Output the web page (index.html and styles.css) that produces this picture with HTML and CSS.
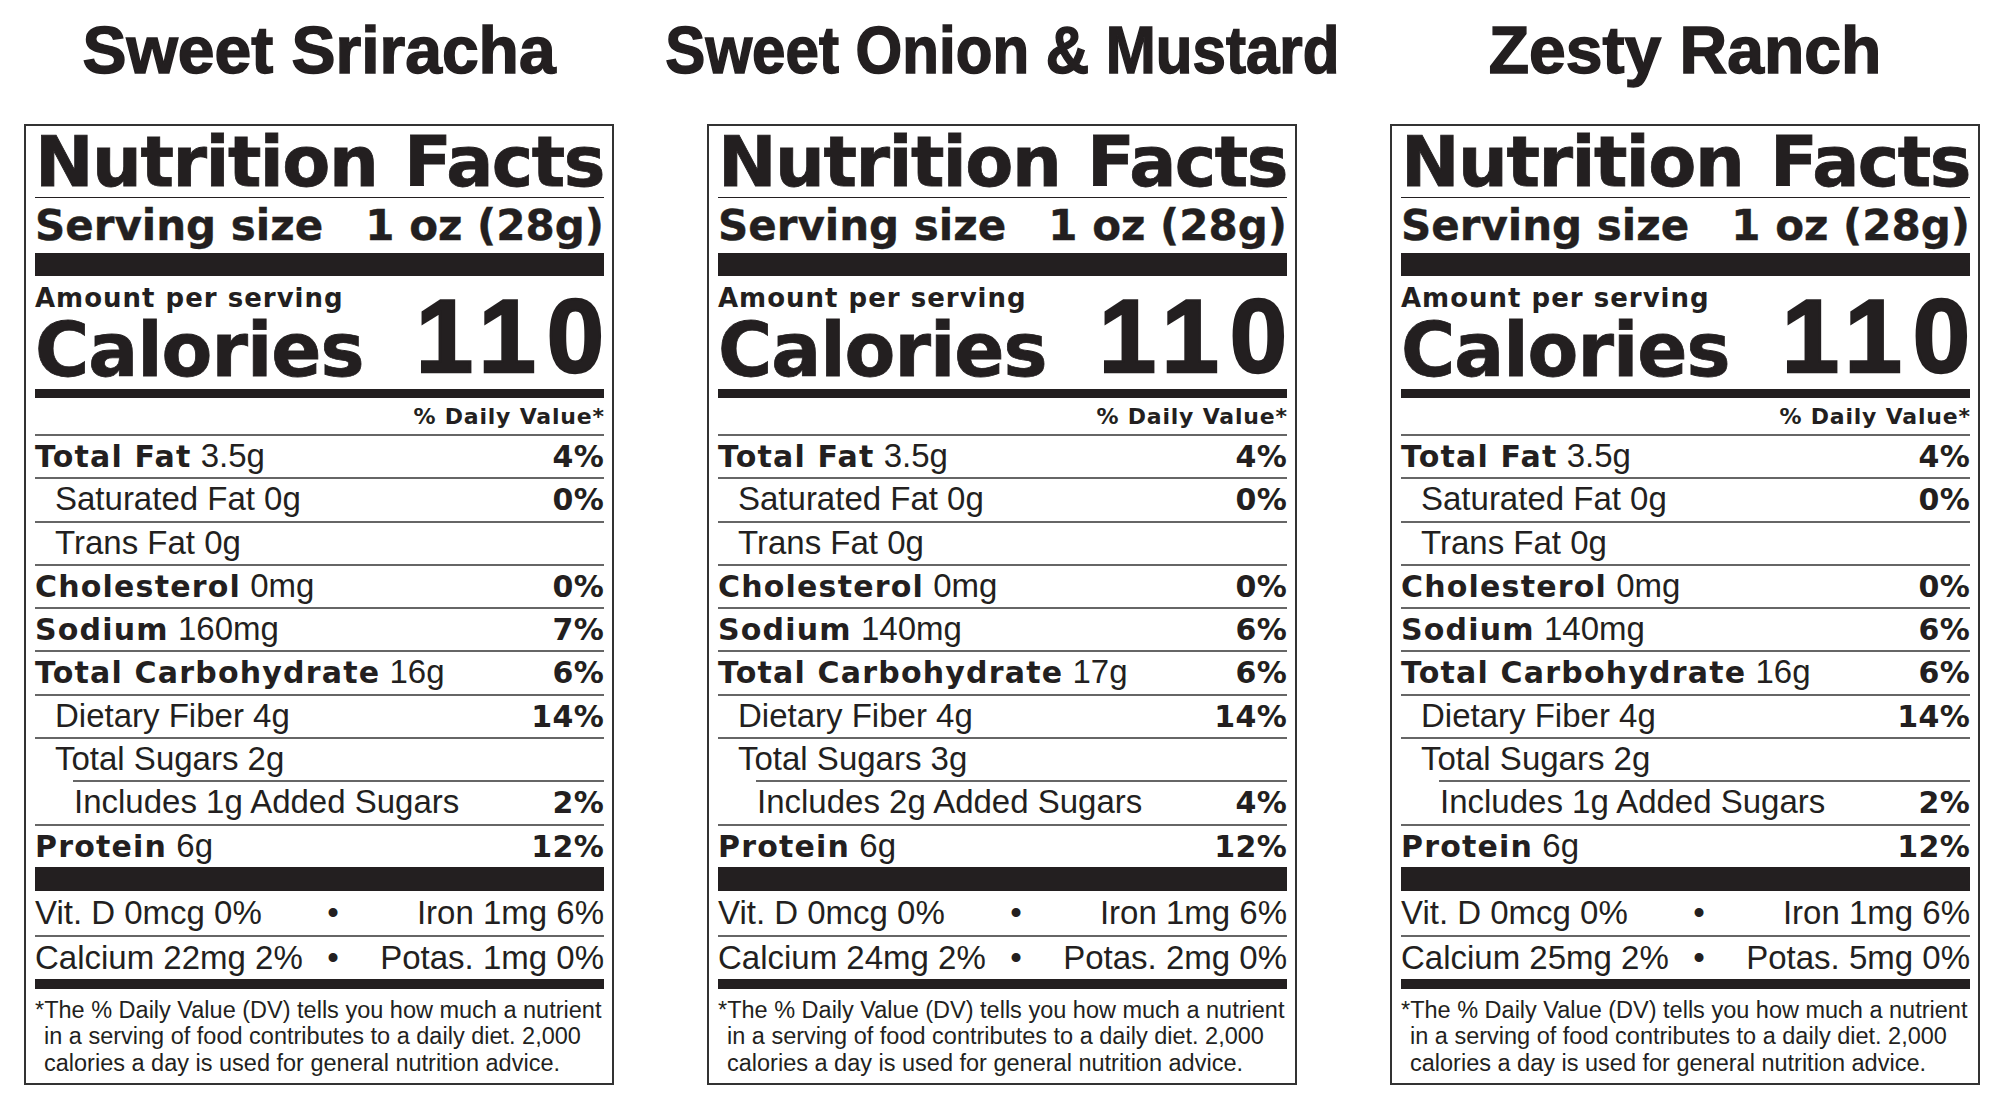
FILE: index.html
```html
<!DOCTYPE html>
<html lang="en">
<head>
<meta charset="utf-8">
<title>Nutrition Facts</title>
<link rel="stylesheet" href="styles.css">
</head>
<body>
<div class="page">

  <section class="panel">
    <h2 class="flavor"><span>Sweet Sriracha</span></h2>
    <div class="label">
      <div class="nf"><span>Nutrition</span><span>Facts</span></div>
      <div class="serving"><span>Serving size</span><span>1 oz (28g)</span></div>
      <div class="bar"></div>
      <div class="cal">
        <div class="cal-left">
          <div class="amount">Amount per serving</div>
          <div class="calories">Calories</div>
        </div>
        <div class="kcal">110</div>
      </div>
      <div class="rule-m"></div>
      <div class="dv">% Daily Value*</div>
      <div class="row"><span><b>Total Fat</b> 3.5g</span><b>4%</b></div>
      <div class="row ind"><span>Saturated Fat 0g</span><b>0%</b></div>
      <div class="row ind"><span>Trans Fat 0g</span></div>
      <div class="row"><span><b>Cholesterol</b> 0mg</span><b>0%</b></div>
      <div class="row"><span><b>Sodium</b> 160mg</span><b>7%</b></div>
      <div class="row"><span><b>Total Carbohydrate</b> 16g</span><b>6%</b></div>
      <div class="row ind"><span>Dietary Fiber 4g</span><b>14%</b></div>
      <div class="row ind"><span>Total Sugars 2g</span></div>
      <div class="row ind2"><span>Includes 1g Added Sugars</span><b>2%</b></div>
      <div class="row"><span><b>Protein</b> 6g</span><b>12%</b></div>
      <div class="bar bar-b"></div>
      <div class="vit"><span>Vit. D 0mcg 0%</span><span class="dot">•</span><span class="r">Iron 1mg 6%</span></div>
      <div class="vit sep"><span>Calcium 22mg 2%</span><span class="dot">•</span><span class="r">Potas. 1mg 0%</span></div>
      <div class="rule-f"></div>
      <div class="foot">
        <div>*The % Daily Value (DV) tells you how much a nutrient</div>
        <div class="hang">in a serving of food contributes to a daily diet. 2,000</div>
        <div class="hang">calories a day is used for general nutrition advice.</div>
      </div>
    </div>
  </section>

  <section class="panel">
    <h2 class="flavor"><span class="squeeze">Sweet Onion &amp; Mustard</span></h2>
    <div class="label">
      <div class="nf"><span>Nutrition</span><span>Facts</span></div>
      <div class="serving"><span>Serving size</span><span>1 oz (28g)</span></div>
      <div class="bar"></div>
      <div class="cal">
        <div class="cal-left">
          <div class="amount">Amount per serving</div>
          <div class="calories">Calories</div>
        </div>
        <div class="kcal">110</div>
      </div>
      <div class="rule-m"></div>
      <div class="dv">% Daily Value*</div>
      <div class="row"><span><b>Total Fat</b> 3.5g</span><b>4%</b></div>
      <div class="row ind"><span>Saturated Fat 0g</span><b>0%</b></div>
      <div class="row ind"><span>Trans Fat 0g</span></div>
      <div class="row"><span><b>Cholesterol</b> 0mg</span><b>0%</b></div>
      <div class="row"><span><b>Sodium</b> 140mg</span><b>6%</b></div>
      <div class="row"><span><b>Total Carbohydrate</b> 17g</span><b>6%</b></div>
      <div class="row ind"><span>Dietary Fiber 4g</span><b>14%</b></div>
      <div class="row ind"><span>Total Sugars 3g</span></div>
      <div class="row ind2"><span>Includes 2g Added Sugars</span><b>4%</b></div>
      <div class="row"><span><b>Protein</b> 6g</span><b>12%</b></div>
      <div class="bar bar-b"></div>
      <div class="vit"><span>Vit. D 0mcg 0%</span><span class="dot">•</span><span class="r">Iron 1mg 6%</span></div>
      <div class="vit sep"><span>Calcium 24mg 2%</span><span class="dot">•</span><span class="r">Potas. 2mg 0%</span></div>
      <div class="rule-f"></div>
      <div class="foot">
        <div>*The % Daily Value (DV) tells you how much a nutrient</div>
        <div class="hang">in a serving of food contributes to a daily diet. 2,000</div>
        <div class="hang">calories a day is used for general nutrition advice.</div>
      </div>
    </div>
  </section>

  <section class="panel">
    <h2 class="flavor"><span>Zesty Ranch</span></h2>
    <div class="label">
      <div class="nf"><span>Nutrition</span><span>Facts</span></div>
      <div class="serving"><span>Serving size</span><span>1 oz (28g)</span></div>
      <div class="bar"></div>
      <div class="cal">
        <div class="cal-left">
          <div class="amount">Amount per serving</div>
          <div class="calories">Calories</div>
        </div>
        <div class="kcal">110</div>
      </div>
      <div class="rule-m"></div>
      <div class="dv">% Daily Value*</div>
      <div class="row"><span><b>Total Fat</b> 3.5g</span><b>4%</b></div>
      <div class="row ind"><span>Saturated Fat 0g</span><b>0%</b></div>
      <div class="row ind"><span>Trans Fat 0g</span></div>
      <div class="row"><span><b>Cholesterol</b> 0mg</span><b>0%</b></div>
      <div class="row"><span><b>Sodium</b> 140mg</span><b>6%</b></div>
      <div class="row"><span><b>Total Carbohydrate</b> 16g</span><b>6%</b></div>
      <div class="row ind"><span>Dietary Fiber 4g</span><b>14%</b></div>
      <div class="row ind"><span>Total Sugars 2g</span></div>
      <div class="row ind2"><span>Includes 1g Added Sugars</span><b>2%</b></div>
      <div class="row"><span><b>Protein</b> 6g</span><b>12%</b></div>
      <div class="bar bar-b"></div>
      <div class="vit"><span>Vit. D 0mcg 0%</span><span class="dot">•</span><span class="r">Iron 1mg 6%</span></div>
      <div class="vit sep"><span>Calcium 25mg 2%</span><span class="dot">•</span><span class="r">Potas. 5mg 0%</span></div>
      <div class="rule-f"></div>
      <div class="foot">
        <div>*The % Daily Value (DV) tells you how much a nutrient</div>
        <div class="hang">in a serving of food contributes to a daily diet. 2,000</div>
        <div class="hang">calories a day is used for general nutrition advice.</div>
      </div>
    </div>
  </section>

</div>
</body>
</html>
```

FILE: styles.css
```css
html, body {
  margin: 0;
  padding: 0;
  background: #ffffff;
}

body {
  color: #231f20;
  font-family: "Liberation Sans", Arial, sans-serif;
}

.page {
  display: flex;
  gap: 93px;
  padding-left: 24px;
}

.panel {
  width: 590px;
  flex: 0 0 590px;
}

.flavor {
  margin: 0;
  display: flex;
  justify-content: center;
  height: 124px;
  box-sizing: border-box;
  padding-top: 13px;
  font: bold 66px/74px "Liberation Sans", Arial, sans-serif;
  white-space: nowrap;
  -webkit-text-stroke: 1.5px #231f20;
}

.flavor span {
  flex: 0 0 auto;
}

.flavor .squeeze {
  display: inline-block;
  transform: scaleX(0.91);
}

.label {
  border: 2px solid #333333;
  padding: 0 8px 0 9px;
}

.nf {
  display: flex;
  justify-content: space-between;
  padding-top: 1px;
  height: 70px;
  font: bold 70px/70px "DejaVu Sans", sans-serif;
  letter-spacing: -1.5px;
  white-space: nowrap;
  border-bottom: 1px solid #231f20;
  -webkit-text-stroke: 0.8px #231f20;
}

.serving {
  display: flex;
  justify-content: space-between;
  height: 55px;
  font: bold 42px/55px "DejaVu Sans", sans-serif;
  white-space: nowrap;
  -webkit-text-stroke: 0.4px #231f20;
}

.bar {
  height: 23px;
  background: #231f20;
}

.bar-b {
  height: 24px;
}

.cal {
  display: flex;
  justify-content: space-between;
  align-items: flex-end;
  height: 113px;
  box-sizing: border-box;
  padding: 7px 0 2px;
}

.amount {
  font: bold 26px/30px "DejaVu Sans", sans-serif;
  letter-spacing: 1px;
  white-space: nowrap;
}

.calories {
  font: bold 74px/74px "DejaVu Sans", sans-serif;
  letter-spacing: -1px;
  white-space: nowrap;
  -webkit-text-stroke: 0.8px #231f20;
}

.kcal {
  font: bold 103px/100px "Liberation Sans", Arial, sans-serif;
  letter-spacing: 11px;
  margin-right: -11px;
  -webkit-text-stroke: 2.5px #231f20;
}

.rule-m {
  height: 9px;
  background: #231f20;
}

.dv {
  height: 36px;
  box-sizing: border-box;
  padding-top: 7px;
  text-align: right;
  font: bold 22px/24px "DejaVu Sans", sans-serif;
  letter-spacing: 0.8px;
  margin-right: -0.8px;
  white-space: nowrap;
}

.row {
  display: flex;
  justify-content: space-between;
  align-items: baseline;
  height: 43.3px;
  box-sizing: border-box;
  border-top: 2px solid #666666;
  font-size: 33px;
  line-height: 39.3px;
  white-space: nowrap;
}

.row b {
  font-family: "DejaVu Sans", sans-serif;
  font-weight: bold;
  font-size: 30px;
  letter-spacing: 1.2px;
}

.row > b {
  letter-spacing: 0.3px;
}

.row.ind {
  padding-left: 20px;
}

.row.ind2 {
  margin-left: 38px;
  padding-left: 1px;
}

.vit {
  display: grid;
  grid-template-columns: 283px 30px 1fr;
  height: 44px;
  box-sizing: border-box;
  font-size: 33px;
  line-height: 44px;
  white-space: nowrap;
}

.vit.sep {
  border-top: 2px solid #666666;
  line-height: 42px;
}

.vit .dot {
  text-align: center;
}

.vit .r {
  text-align: right;
}

.rule-f {
  height: 10px;
  background: #231f20;
}

.foot {
  height: 94px;
  box-sizing: border-box;
  padding: 8px 0 6px;
  font-size: 23.5px;
  line-height: 26.5px;
  white-space: nowrap;
}

.foot .hang {
  padding-left: 9px;
}
```
